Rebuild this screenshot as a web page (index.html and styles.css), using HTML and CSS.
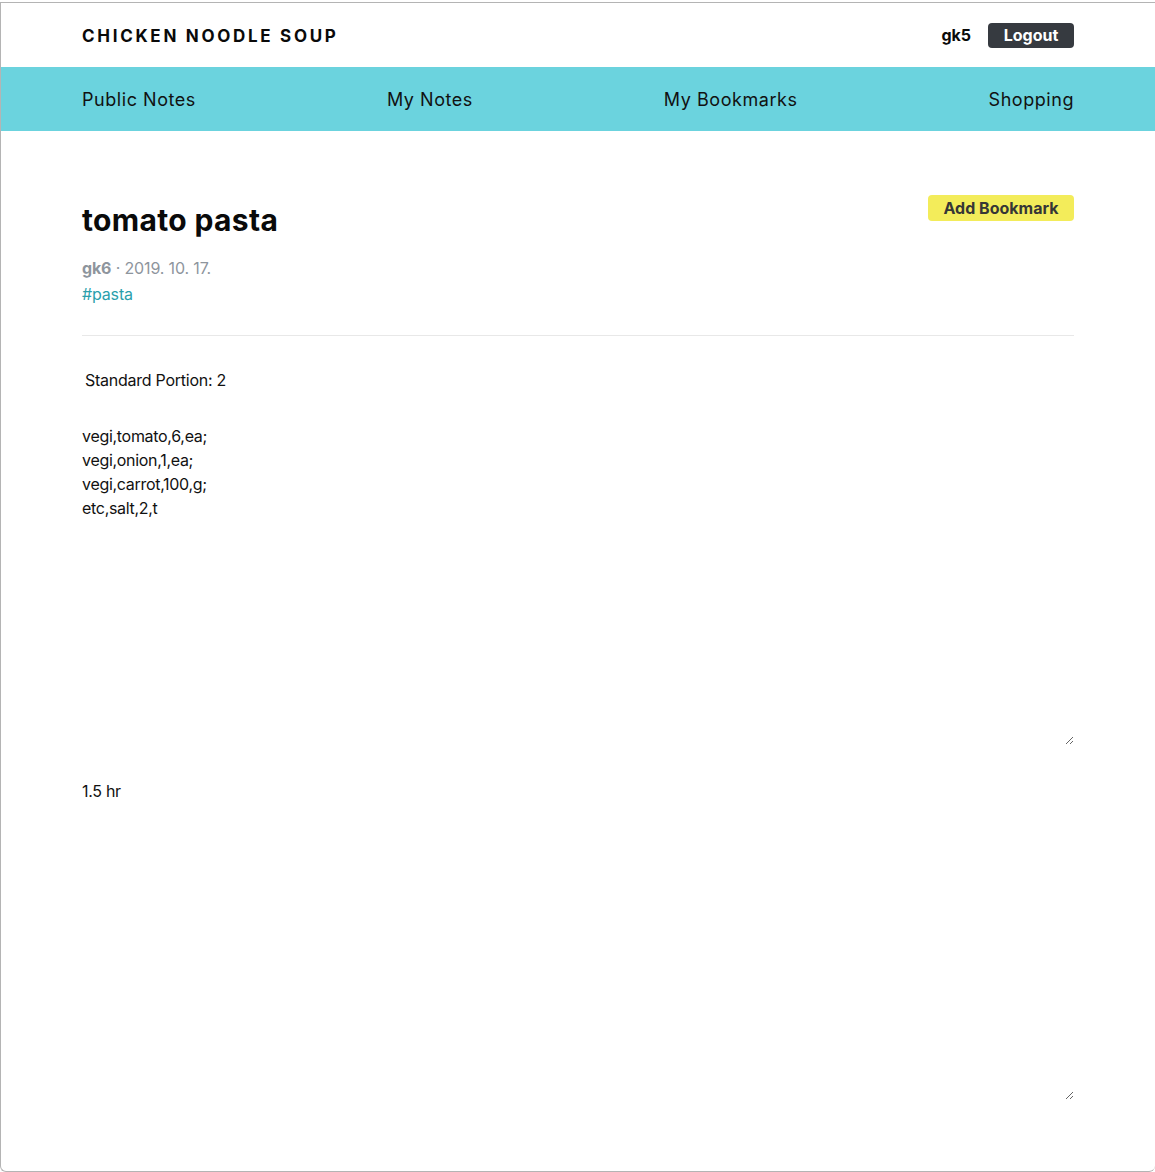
FILE: index.html
```html
<!DOCTYPE html>
<html lang="en">
<head>
<meta charset="utf-8">
<title>Chicken Noodle Soup</title>
<link rel="stylesheet" href="styles.css">
</head>
<body>
<div class="window">
  <header class="topbar">
    <div class="container topbar-inner">
      <div class="logo">CHICKEN NOODLE SOUP</div>
      <div class="user">
        <span class="username">gk5</span>
        <button class="btn-logout">Logout</button>
      </div>
    </div>
  </header>
  <nav class="navbar">
    <div class="container nav-inner">
      <a class="nav-link">Public Notes</a>
      <a class="nav-link">My Notes</a>
      <a class="nav-link">My Bookmarks</a>
      <a class="nav-link">Shopping</a>
    </div>
  </nav>
  <main class="container main">
    <div class="title-row">
      <h1 class="title">tomato pasta</h1>
      <button class="btn-bookmark">Add Bookmark</button>
    </div>
    <div class="meta"><span class="author">gk6</span> · 2019. 10. 17.</div>
    <div class="tags"><a class="tag">#pasta</a></div>
    <hr class="divider">
    <div class="portion">Standard Portion: 2</div>
    <textarea class="note-area">vegi,tomato,6,ea;
vegi,onion,1,ea;
vegi,carrot,100,g;
etc,salt,2,t</textarea>
    <textarea class="note-area second">1.5 hr</textarea>
  </main>
</div>
</body>
</html>
```

FILE: styles.css
```css
* { box-sizing: border-box; }
html, body { margin: 0; padding: 0; background: #fff; }
body {
  font-family: Inter, "Noto Sans", "Liberation Sans", sans-serif;
  color: #111;
  font-size: 16px;
}
.window {
  margin-top: 2px;
  height: 1170px;
  border: 1px solid #b4b4b4;
  border-right: none;
  border-radius: 0 0 6px 6px;
  overflow: hidden;
}
.container {
  width: 992px;
  margin: 0 auto;
}
.topbar { height: 64px; background: #fff; }
.topbar-inner {
  height: 100%;
  display: flex;
  align-items: center;
  justify-content: space-between;
}
.logo {
  font-weight: 700;
  font-size: 17px;
  letter-spacing: 2.7px;
  color: #0a0a0a;
  padding-top: 2px;
}
.user { display: flex; align-items: center; gap: 17px; }
.username { font-weight: 700; font-size: 16px; color: #0a0a0a; }
.btn-logout {
  font-family: inherit;
  font-weight: 700;
  font-size: 16px;
  color: #fff;
  background: #363a40;
  border: none;
  border-radius: 4px;
  height: 25px;
  width: 86px;
  padding: 0;
}
.navbar { height: 64px; background: #6bd3de; }
.nav-inner {
  height: 100%;
  display: flex;
  align-items: center;
  justify-content: space-between;
}
.nav-link {
  font-size: 18px;
  letter-spacing: 0.55px;
  color: #111;
}
.main { padding-top: 64px; }
.title-row {
  display: flex;
  justify-content: space-between;
  align-items: flex-start;
}
.title {
  margin: 7px 0 0;
  font-size: 30px;
  line-height: 36px;
  font-weight: 700;
  letter-spacing: 0.35px;
  color: #0a0a0a;
}
.btn-bookmark {
  font-family: inherit;
  font-weight: 700;
  font-size: 16px;
  color: #363636;
  background: #f3ec5a;
  border: none;
  border-radius: 4px;
  height: 26px;
  width: 146px;
  padding: 0;
}
.meta {
  margin-top: 17px;
  line-height: 26px;
  color: #8e959d;
  letter-spacing: -0.15px;
}
.author { font-weight: 700; }
.tags { line-height: 26px; letter-spacing: -0.15px; }
.tag { color: #2a9fac; }
.divider {
  margin: 28px 0 0;
  border: none;
  border-top: 1px solid #e8e8e8;
}
.portion {
  margin-top: 32px;
  padding-left: 3px;
  line-height: 24px;
  letter-spacing: -0.25px;
}
.note-area {
  display: block;
  width: 992px;
  height: 321px;
  margin-top: 32px;
  padding: 0;
  border: none;
  outline: none;
  font-family: inherit;
  font-size: 16px;
  line-height: 24px;
  letter-spacing: -0.3px;
  color: #111;
  background: transparent;
}
.note-area.second { margin-top: 34px; }
```
